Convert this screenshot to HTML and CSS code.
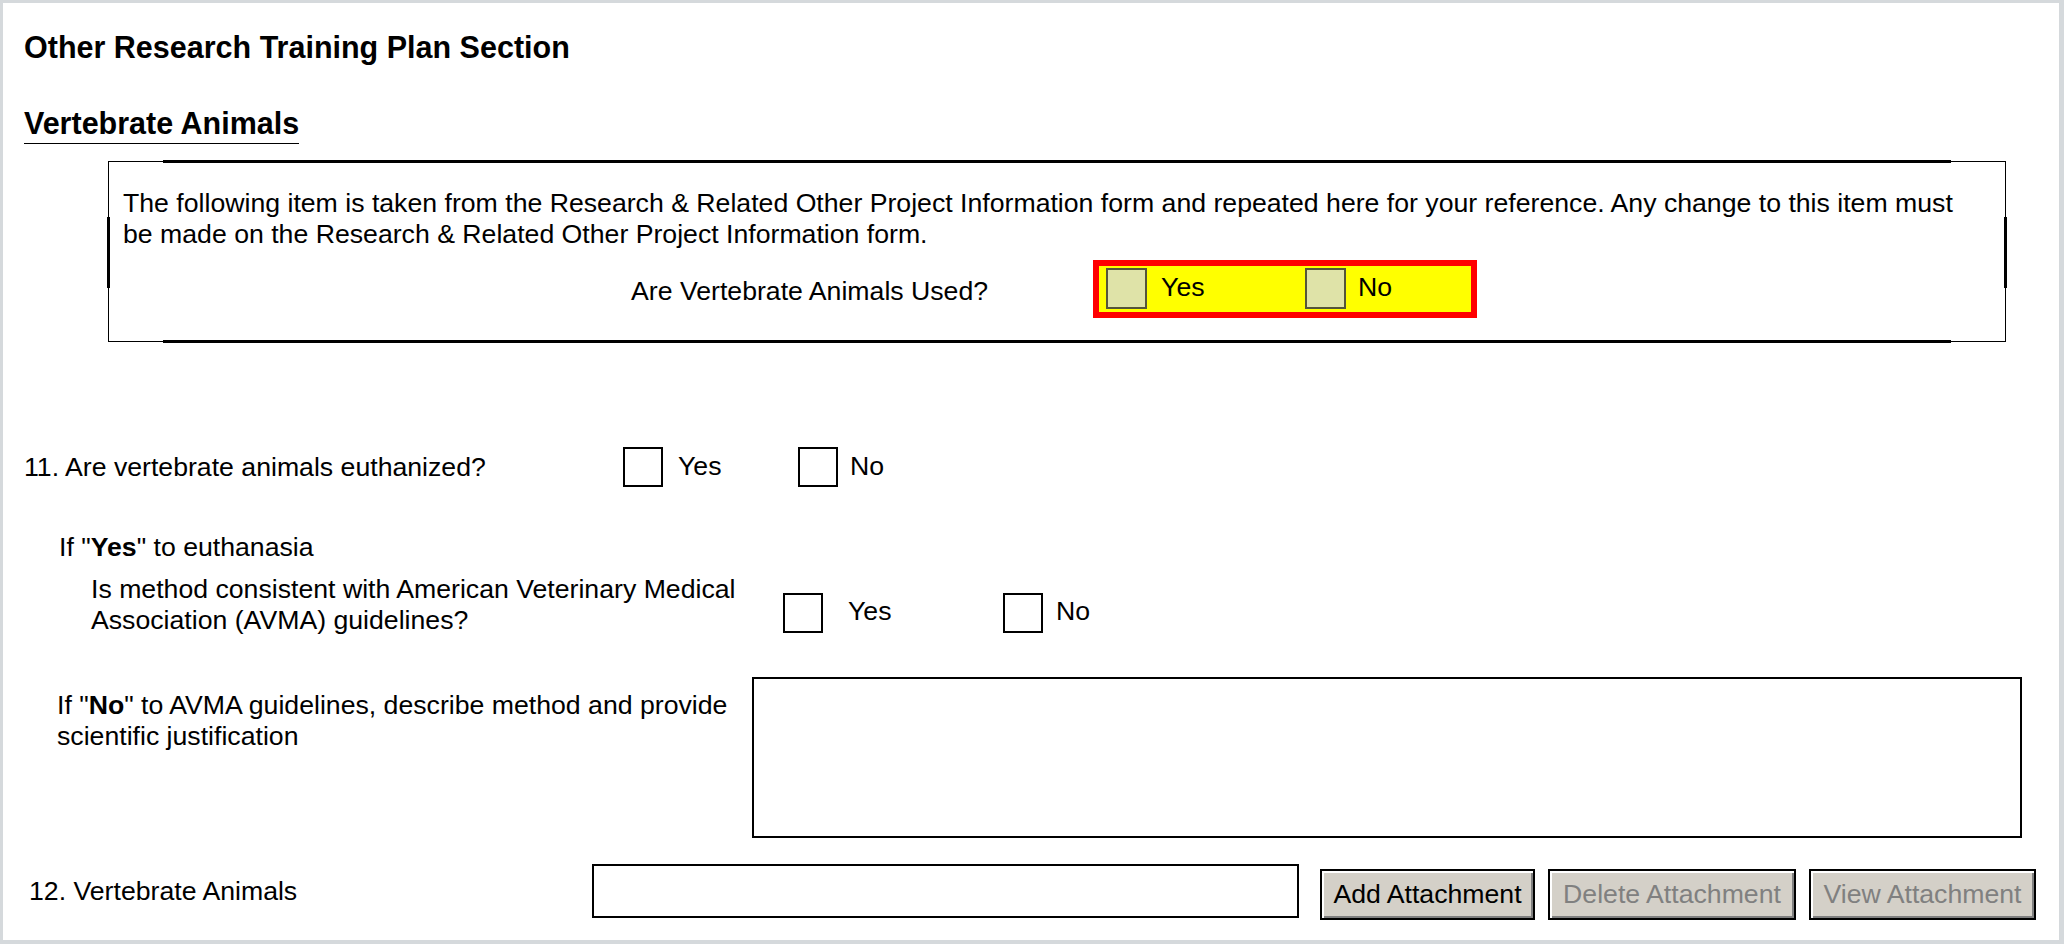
FILE: index.html
```html
<!DOCTYPE html>
<html lang="en">
<head>
<meta charset="utf-8">
<title>Other Research Training Plan Section</title>
<link rel="stylesheet" href="styles.css">
</head>
<body>
<div class="frame">
  <div class="content">
    <h1 class="title">Other Research Training Plan Section</h1>
    <h2 class="section">Vertebrate Animals</h2>

    <div class="ref-box">
      <p class="ref-text">The following item is taken from the Research &amp; Related Other Project Information form and repeated here for your reference. Any change to this item must be made on the Research &amp; Related Other Project Information form.</p>
      <div class="ref-row">
        <span class="ref-label">Are Vertebrate Animals Used?</span>
        <div class="highlight">
          <span class="hl-opt hl-yes"><span class="hl-box"></span><span class="hl-text hl-text-yes">Yes</span></span>
          <span class="hl-opt"><span class="hl-box"></span><span class="hl-text">No</span></span>
        </div>
      </div>
    </div>

    <div class="q11">
      <span class="q11-label">11. Are vertebrate animals euthanized?</span>
      <span class="opt opt-q11-yes"><span class="cb"></span><span class="opt-text">Yes</span></span>
      <span class="opt"><span class="cb"></span><span class="opt-text opt-text-no">No</span></span>
    </div>

    <p class="if-yes">If "<b>Yes</b>" to euthanasia</p>

    <div class="avma">
      <span class="avma-label">Is method consistent with American Veterinary Medical Association (AVMA) guidelines?</span>
      <span class="opt opt-avma-yes"><span class="cb cb-avma"></span><span class="opt-text opt-text-avma">Yes</span></span>
      <span class="opt"><span class="cb cb-avma"></span><span class="opt-text opt-text-no avma-no">No</span></span>
    </div>

    <div class="if-no">
      <span class="if-no-label">If "<b>No</b>" to AVMA guidelines, describe method and provide scientific justification</span>
      <div class="textarea"></div>
    </div>

    <div class="q12">
      <span class="q12-label">12. Vertebrate Animals</span>
      <div class="file-input"></div>
      <div class="buttons">
        <span class="btn btn-add">Add Attachment</span>
        <span class="btn btn-disabled btn-delete">Delete Attachment</span>
        <span class="btn btn-disabled btn-view">View Attachment</span>
      </div>
    </div>
  </div>
</div>
</body>
</html>
```

FILE: styles.css
```css
html, body {
  margin: 0;
  padding: 0;
  background: #ffffff;
}

body {
  font-family: "Liberation Sans", Arial, sans-serif;
  font-size: 26.67px;
  line-height: 31.5px;
  color: #000;
}

.frame {
  box-sizing: border-box;
  height: 944px;
  margin-right: 2px;
  border: 3px solid #d5d9dc;
  border-right-width: 5px;
  border-bottom-width: 4px;
  overflow: hidden;
}

.content {
  padding: 26px 0 0 21px;
}

.title {
  margin: 0;
  font-size: 30.5px;
  line-height: 36px;
  font-weight: bold;
}

.section {
  display: inline-block;
  margin: 39.5px 0 0 0;
  font-size: 30.5px;
  line-height: 36px;
  font-weight: bold;
  padding: 0 0 2px 0;
  border-bottom: 1px solid #000;
}

/* reference box */
.ref-box {
  position: relative;
  box-sizing: border-box;
  width: 1898px;
  height: 181px;
  margin: 17px 0 0 84px;
  border: 1px solid #000;
  padding: 26px 28px 0 14px;
}

.ref-box::before {
  content: "";
  position: absolute;
  left: 54px;
  right: 54px;
  top: -2px;
  bottom: -2px;
  border-top: 3px solid #000;
  border-bottom: 3px solid #000;
}

.ref-box::after {
  content: "";
  position: absolute;
  top: 55px;
  bottom: 53px;
  left: -2px;
  right: -2px;
  border-left: 3px solid #000;
  border-right: 3px solid #000;
}

.ref-text {
  margin: 0;
}

.ref-row {
  display: flex;
  align-items: center;
  margin-top: 9px;
  padding-left: 508px;
}

.ref-label {
  margin-right: 105px;
  padding-top: 7px;
}

.highlight {
  display: flex;
  align-items: center;
  box-sizing: border-box;
  width: 384px;
  height: 58px;
  background: #ffff00;
  border: 6px solid #ff0000;
  padding: 0 0 0 7px;
}

.hl-opt {
  display: flex;
  align-items: center;
}

.hl-yes {
  width: 199px;
}

.hl-box {
  box-sizing: border-box;
  width: 41px;
  height: 41px;
  background: #dfe3a8;
  border: 2px solid #55553a;
}

.hl-text {
  margin-left: 12px;
  margin-top: -1px;
}

.hl-text-yes {
  margin-left: 14px;
}

/* question 11 */
.q11 {
  display: flex;
  align-items: center;
  height: 40px;
  margin-top: 105px;
}

.q11-label {
  flex: 0 0 599px;
  padding-top: 3px;
}

.opt {
  display: flex;
  align-items: center;
}

.opt-q11-yes {
  width: 175px;
}

.cb {
  box-sizing: border-box;
  width: 40px;
  height: 40px;
  border: 2px solid #000;
  background: #fff;
}

.opt-text {
  margin-left: 15px;
  margin-top: 0;
}

.opt-text-no {
  margin-left: 12px;
}

.if-yes {
  margin: 45px 0 0 35px;
}

/* AVMA */
.avma {
  display: flex;
  align-items: flex-start;
  margin-top: 9.5px;
  padding-left: 67px;
}

.avma-label {
  flex: 0 0 692px;
  padding-top: 1px;
}

.cb-avma {
  margin-top: 20px;
}

.opt-avma-yes {
  width: 220px;
}

.opt-text-avma {
  margin-left: 25px;
  margin-top: 23.5px;
}

.avma-no {
  margin-top: 23.5px;
  margin-left: 13px;
}

.avma .opt {
  align-items: flex-start;
}

/* If No */
.if-no {
  display: flex;
  align-items: flex-start;
  margin-top: 40.75px;
  padding-left: 33px;
}

.if-no-label {
  flex: 0 0 695px;
  padding-top: 12.5px;
}

.textarea {
  box-sizing: border-box;
  width: 1270px;
  height: 161px;
  border: 2px solid #000;
  background: #fff;
}

/* Q12 */
.q12 {
  display: flex;
  align-items: flex-start;
  margin-top: 26px;
  padding-left: 5px;
}

.q12-label {
  flex: 0 0 563px;
  padding-top: 12px;
}

.file-input {
  box-sizing: border-box;
  width: 707px;
  height: 54px;
  border: 2px solid #000;
  background: #fff;
}

.buttons {
  display: flex;
  gap: 13px;
  margin-left: 21px;
  margin-top: 5px;
}

.btn {
  box-sizing: border-box;
  height: 51px;
  display: flex;
  align-items: center;
  justify-content: center;
  background: #d4d0c8;
  border: 2px solid #000;
  box-shadow: inset 2px 2px 0 #ffffff, inset -2px -2px 0 #808080;
  color: #000;
  white-space: nowrap;
}

.btn-add {
  width: 215px;
}

.btn-delete {
  width: 248px;
}

.btn-view {
  width: 227px;
}

.btn-disabled {
  color: #808080;
}
```
